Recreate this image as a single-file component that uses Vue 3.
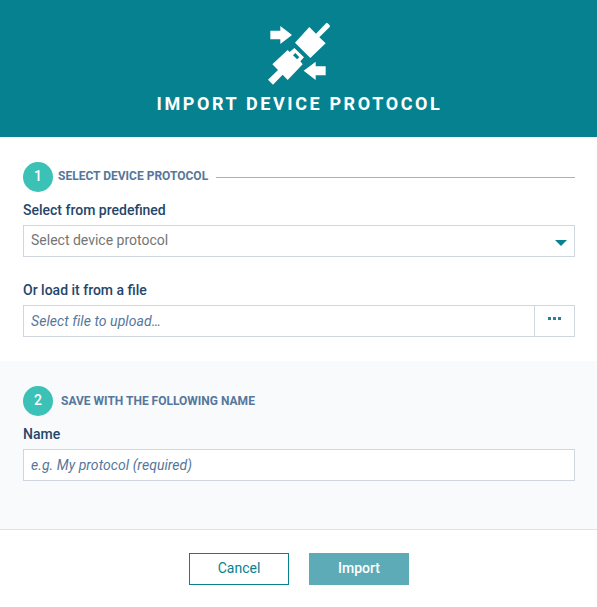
<script setup>
import { ref } from 'vue'

const fileName = ref('')
const protocolName = ref('')
</script>

<template>
  <main class="dialog">
    <header class="head">
      <svg class="logo" viewBox="27 24 192 192" fill="#fff">
        <path d="M37 50H67V36L102 63L67 90V76H37Z" />
        <path d="M203 157H173V143L137 170L173 198V184H203Z" />
        <path d="M154 39L174 59L204 28Q207 26 209 28L215 34Q217 37 215 39L184 70L203 88L157 132L111 86Z" />
        <path fill-rule="evenodd" d="M43 151L89 108L95 114L109 102L138 130L127 142L134 151L89 198L74 182L45 212L30 197L60 168ZM112 117L105 124L117 136L124 130Z" />
      </svg>
      <h1 class="title">IMPORT DEVICE PROTOCOL</h1>
    </header>

    <section class="step">
      <div class="step-head">
        <span class="badge">1</span>
        <h2 class="step-title first">SELECT DEVICE PROTOCOL</h2>
        <span class="rule"></span>
      </div>
      <label class="label">Select from predefined</label>
      <div class="field select">
        <span class="select-text">Select device protocol</span>
        <svg class="caret" viewBox="0 0 12 6"><path d="M0 0H12L6 6Z" fill="#048291" /></svg>
      </div>
      <label class="label second">Or load it from a file</label>
      <div class="field">
        <input v-model="fileName" class="input" placeholder="Select file to upload…" />
        <button class="browse"><i></i><i></i><i></i></button>
      </div>
    </section>

    <section class="step save">
      <div class="step-head">
        <span class="badge">2</span>
        <h2 class="step-title">SAVE WITH THE FOLLOWING NAME</h2>
      </div>
      <label class="label">Name</label>
      <div class="field">
        <input v-model="protocolName" class="input" placeholder="e.g. My protocol (required)" />
      </div>
    </section>

    <footer class="foot">
      <button class="btn cancel">Cancel</button>
      <button class="btn import">Import</button>
    </footer>
  </main>
</template>

<style>
body { margin: 0; background: #fff; }
</style>

<style scoped>
.dialog, .dialog * { box-sizing: border-box; }
.dialog {
  width: 597px;
  height: 607px;
  overflow: hidden;
  font-family: Roboto, sans-serif;
  font-size: 14px;
  color: #25466a;
  background: #fff;
}
.head {
  height: 137px;
  padding-top: 22px;
  background: #068190;
  display: flex;
  flex-direction: column;
  align-items: center;
}
.logo { width: 64px; height: 64px; flex: none; margin-left: 1px; }
.title {
  margin: 7px 0 0 2px;
  font-size: 18px;
  line-height: 22px;
  font-weight: 700;
  letter-spacing: 2.6px;
  color: #fff;
  white-space: nowrap;
}
.step { height: 224px; padding: 25px 22px 0 23px; }
.save { height: 169px; background: #f9fafc; border-bottom: 1px solid #dfe3e8; }
.step-head { display: flex; align-items: center; height: 30px; }
.badge {
  width: 30px;
  height: 30px;
  border-radius: 50%;
  background: #3bc1b5;
  color: #fff;
  text-align: center;
  line-height: 29px;
  font-weight: 500;
  flex: none;
}
.step-title {
  margin: 0 0 0 8px;
  font-size: 12px;
  line-height: 30px;
  font-weight: 700;
  color: #55779b;
  white-space: nowrap;
}
.step-title.first { width: 150px; margin: -3px 8px 0 5px; }
.rule { flex: 1; height: 1px; margin-top: 1px; background: #a3b3c4; }
.label {
  display: block;
  height: 16px;
  margin: 10px 0 7px;
  line-height: 16px;
  font-weight: 500;
}
.label.second { margin-top: 25px; }
.field {
  display: flex;
  height: 32px;
  border: 1px solid #d0d6df;
  background: #fff;
}
.select { justify-content: space-between; padding: 0 7px; }
.select-text { line-height: 29px; color: #757575; }
.caret { width: 12px; height: 6px; margin-top: 14px; }
.input {
  flex: 1;
  min-width: 0;
  border: 0;
  outline: 0;
  padding: 0 7px;
  background: transparent;
  font: italic 14px Roboto, sans-serif;
  letter-spacing: 0.06px;
  color: #25466a;
}
.input::placeholder { color: #55779b; opacity: 1; }
.browse {
  width: 40px;
  padding: 0 1px 5px 0;
  border: 0;
  border-left: 1px solid #d0d6df;
  background: #fff;
  display: flex;
  align-items: center;
  justify-content: center;
  gap: 2px;
}
.browse i { width: 3px; height: 3px; background: #2c7f98; }
.foot { display: flex; justify-content: center; gap: 20px; padding: 23px 0 0 1px; }
.btn {
  width: 100px;
  height: 32px;
  padding: 0 0 2px;
  border: 1px solid #068190;
  font: 14px Roboto, sans-serif;
}
.cancel { background: #fff; color: #068190; }
.import { background: #5dabb7; border-color: #5dabb7; color: #fff; font-weight: 500; }
</style>
